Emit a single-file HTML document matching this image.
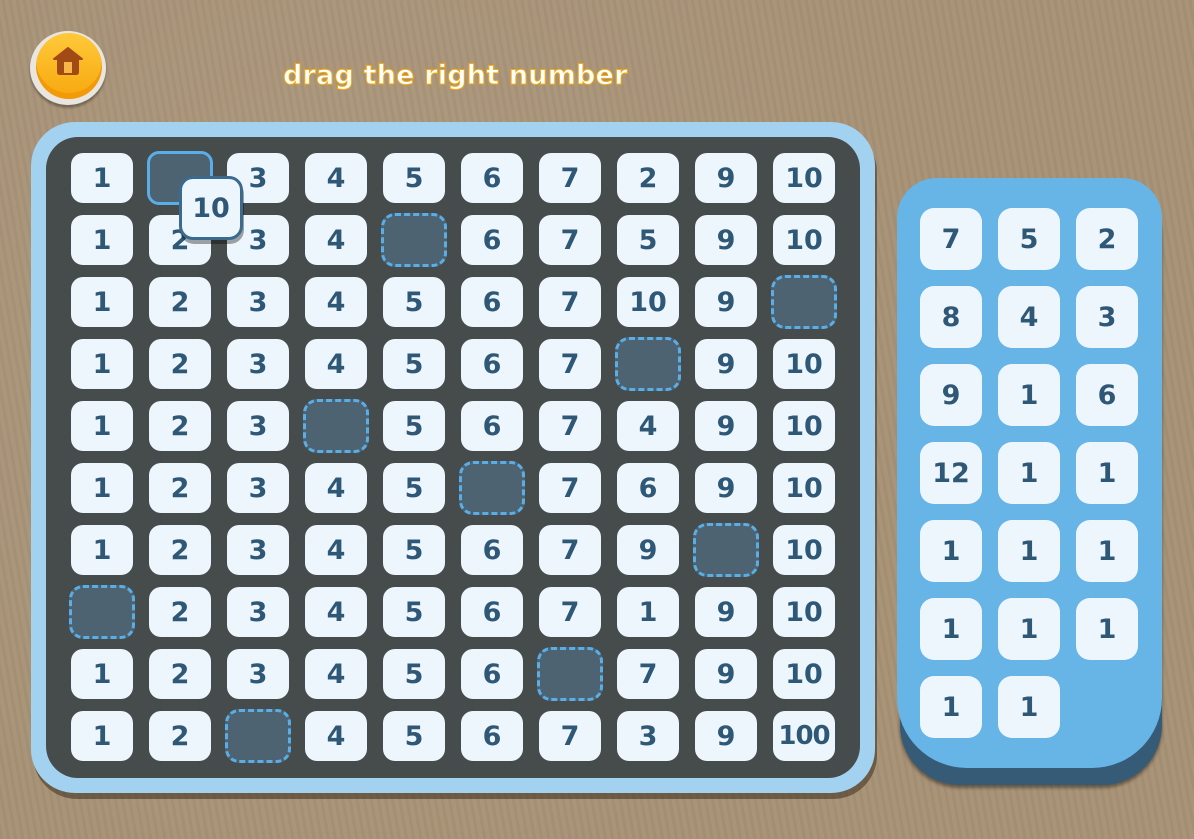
<!DOCTYPE html>
<html><head><meta charset="utf-8"><style>
*{margin:0;padding:0;box-sizing:border-box}
body{width:1194px;height:839px;overflow:hidden;position:relative;background:#a99478;
background-image:radial-gradient(circle at 30% 40%,rgba(255,255,255,.06),transparent 60%),repeating-linear-gradient(80deg,rgba(0,0,0,.04) 0 3px,transparent 3px 7px);
font-family:"DejaVu Sans","Liberation Sans",sans-serif}
.abs{position:absolute}
.t{position:absolute;width:62px;height:50px;background:#eef6fd;border-radius:12px;color:#2f5877;font-weight:bold;font-size:27px;display:flex;align-items:center;justify-content:center}
.s{position:absolute;width:66px;height:54px;border:3px dashed #5aaee8;border-radius:14px;background:#4d6371}
.p{position:absolute;width:62px;height:62px;background:#eef6fd;border-radius:14px;color:#2f5877;font-weight:bold;font-size:27px;display:flex;align-items:center;justify-content:center}
</style></head><body>
<div class="abs" style="left:30px;top:31px;width:76px;height:74px;border-radius:50%;background:#e9e6e2;box-shadow:0 3px 2px rgba(0,0,0,.3)"></div>
<div class="abs" style="left:36px;top:33px;width:66px;height:66px;border-radius:50%;background:linear-gradient(#ffc93a,#f7a80d);box-shadow:inset 0 -6px 0 #f29a07"></div>
<svg class="abs" style="left:52px;top:46px" width="32" height="30" viewBox="0 0 32 30"><path d="M16 2 L30 13 L26 13 L26 26 Q26 28 24 28 L8 28 Q6 28 6 26 L6 13 L2 13 Z" fill="#a14a16" stroke="#a14a16" stroke-linejoin="round" stroke-width="2"/><rect x="12" y="16" width="8" height="11" fill="#f6b648"/></svg>
<div class="abs" style="left:283px;top:60px;font-size:27px;font-weight:bold;color:#fff;-webkit-text-stroke:1px #f6a90c;white-space:nowrap;letter-spacing:0.2px">drag the right number</div>
<div class="abs" style="left:33px;top:128px;width:844px;height:671px;border-radius:44px;background:rgba(60,45,30,.55)"></div>
<div class="abs" style="left:31px;top:122px;width:844px;height:671px;border-radius:44px;background:#a3d2f1"></div>
<div class="abs" style="left:46px;top:137px;width:814px;height:641px;border-radius:32px;background:#464b4c"></div>
<div class="abs" style="left:900px;top:190px;width:262px;height:595px;border-radius:40px 40px 60px 60px;background:#365b77;box-shadow:0 3px 3px rgba(0,0,0,.4)"></div>
<div class="abs" style="left:897px;top:178px;width:265px;height:590px;border-radius:40px 40px 70px 70px;background:#67b4e7"></div>
<div id="g"></div>
<script>
var rows=[[1,0,3,4,5,6,7,2,9,10],[1,2,3,4,0,6,7,5,9,10],[1,2,3,4,5,6,7,10,9,0],[1,2,3,4,5,6,7,0,9,10],[1,2,3,0,5,6,7,4,9,10],[1,2,3,4,5,0,7,6,9,10],[1,2,3,4,5,6,7,9,0,10],[0,2,3,4,5,6,7,1,9,10],[1,2,3,4,5,6,0,7,9,10],[1,2,0,4,5,6,7,3,9,100]];
var h='';
rows.forEach(function(r,i){r.forEach(function(v,j){var x=71+78*j,y=153+62*i;
if(v===0){if(i===0)h+='<div class="abs" style="left:'+(x-2)+'px;top:'+(y-2)+'px;width:66px;height:54px;border:3px solid #5aaee8;border-radius:12px;background:#4d6371"></div>';
else h+='<div class="s" style="left:'+(x-2)+'px;top:'+(y-2)+'px"></div>';}
else h+='<div class="t" style="left:'+x+'px;top:'+y+'px'+(v==100?';font-size:26px;letter-spacing:-1px':'')+'">'+v+'</div>';});});
var pv=[7,5,2,8,4,3,9,1,6,12,1,1,1,1,1,1,1,1,1,1];
pv.forEach(function(v,k){var x=920+78*(k%3),y=208+78*Math.floor(k/3);h+='<div class="p" style="left:'+x+'px;top:'+y+'px">'+v+'</div>';});
h+='<div class="abs" style="left:180px;top:180px;width:64px;height:64px;border-radius:14px;background:rgba(0,0,0,.35)"></div>';
h+='<div class="t" style="left:179px;top:176px;width:64px;height:64px;border:3px solid #3c6a8d;border-radius:14px">10</div>';
document.getElementById('g').innerHTML=h;
</script>
</body></html>
